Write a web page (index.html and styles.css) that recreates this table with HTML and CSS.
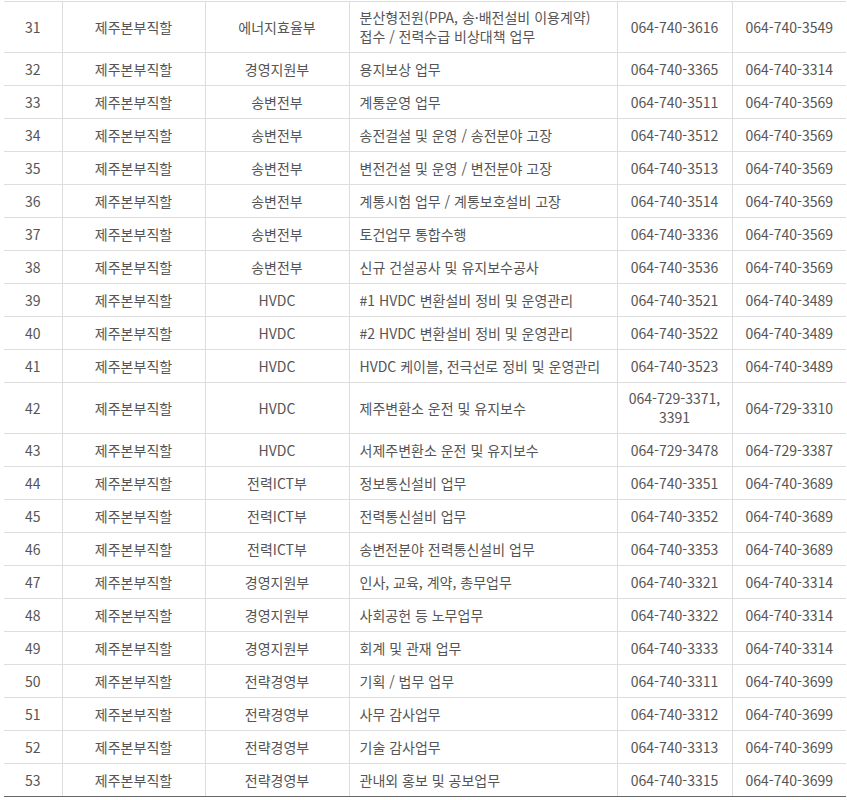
FILE: index.html
```html
<!DOCTYPE html>
<html lang="ko">
<head>
<meta charset="utf-8">
<link rel="stylesheet" href="styles.css">
</head>
<body>
<div class="wrap">
<table class="staff">
<colgroup>
<col class="c-no"><col class="c-org"><col class="c-dept"><col class="c-task"><col class="c-tel"><col class="c-fax">
</colgroup>
<tbody>
<tr class="tall"><td>31</td><td>제주본부직할</td><td>에너지효율부</td><td class="task">분산형전원(PPA, 송·배전설비 이용계약)<br>접수 / 전력수급 비상대책 업무</td><td>064-740-3616</td><td>064-740-3549</td></tr>
<tr><td>32</td><td>제주본부직할</td><td>경영지원부</td><td class="task">용지보상 업무</td><td>064-740-3365</td><td>064-740-3314</td></tr>
<tr><td>33</td><td>제주본부직할</td><td>송변전부</td><td class="task">계통운영 업무</td><td>064-740-3511</td><td>064-740-3569</td></tr>
<tr><td>34</td><td>제주본부직할</td><td>송변전부</td><td class="task">송전걸설 및 운영 / 송전분야 고장</td><td>064-740-3512</td><td>064-740-3569</td></tr>
<tr><td>35</td><td>제주본부직할</td><td>송변전부</td><td class="task">변전건설 및 운영 / 변전분야 고장</td><td>064-740-3513</td><td>064-740-3569</td></tr>
<tr><td>36</td><td>제주본부직할</td><td>송변전부</td><td class="task">계통시험 업무 / 계통보호설비 고장</td><td>064-740-3514</td><td>064-740-3569</td></tr>
<tr><td>37</td><td>제주본부직할</td><td>송변전부</td><td class="task">토건업무 통합수행</td><td>064-740-3336</td><td>064-740-3569</td></tr>
<tr><td>38</td><td>제주본부직할</td><td>송변전부</td><td class="task">신규 건설공사 및 유지보수공사</td><td>064-740-3536</td><td>064-740-3569</td></tr>
<tr><td>39</td><td>제주본부직할</td><td>HVDC</td><td class="task">#1 HVDC 변환설비 정비 및 운영관리</td><td>064-740-3521</td><td>064-740-3489</td></tr>
<tr><td>40</td><td>제주본부직할</td><td>HVDC</td><td class="task">#2 HVDC 변환설비 정비 및 운영관리</td><td>064-740-3522</td><td>064-740-3489</td></tr>
<tr><td>41</td><td>제주본부직할</td><td>HVDC</td><td class="task">HVDC 케이블, 전극선로 정비 및 운영관리</td><td>064-740-3523</td><td>064-740-3489</td></tr>
<tr class="tall"><td>42</td><td>제주본부직할</td><td>HVDC</td><td class="task">제주변환소 운전 및 유지보수</td><td>064-729-3371,<br>3391</td><td>064-729-3310</td></tr>
<tr><td>43</td><td>제주본부직할</td><td>HVDC</td><td class="task">서제주변환소 운전 및 유지보수</td><td>064-729-3478</td><td>064-729-3387</td></tr>
<tr><td>44</td><td>제주본부직할</td><td>전력ICT부</td><td class="task">정보통신설비 업무</td><td>064-740-3351</td><td>064-740-3689</td></tr>
<tr><td>45</td><td>제주본부직할</td><td>전력ICT부</td><td class="task">전력통신설비 업무</td><td>064-740-3352</td><td>064-740-3689</td></tr>
<tr><td>46</td><td>제주본부직할</td><td>전력ICT부</td><td class="task">송변전분야 전력통신설비 업무</td><td>064-740-3353</td><td>064-740-3689</td></tr>
<tr><td>47</td><td>제주본부직할</td><td>경영지원부</td><td class="task">인사, 교육, 계약, 총무업무</td><td>064-740-3321</td><td>064-740-3314</td></tr>
<tr><td>48</td><td>제주본부직할</td><td>경영지원부</td><td class="task">사회공헌 등 노무업무</td><td>064-740-3322</td><td>064-740-3314</td></tr>
<tr><td>49</td><td>제주본부직할</td><td>경영지원부</td><td class="task">회계 및 관재 업무</td><td>064-740-3333</td><td>064-740-3314</td></tr>
<tr><td>50</td><td>제주본부직할</td><td>전략경영부</td><td class="task">기획 / 법무 업무</td><td>064-740-3311</td><td>064-740-3699</td></tr>
<tr><td>51</td><td>제주본부직할</td><td>전략경영부</td><td class="task">사무 감사업무</td><td>064-740-3312</td><td>064-740-3699</td></tr>
<tr><td>52</td><td>제주본부직할</td><td>전략경영부</td><td class="task">기술 감사업무</td><td>064-740-3313</td><td>064-740-3699</td></tr>
<tr><td>53</td><td>제주본부직할</td><td>전략경영부</td><td class="task">관내외 홍보 및 공보업무</td><td>064-740-3315</td><td>064-740-3699</td></tr>
</tbody>
</table>
</div>
</body>
</html>
```
FILE: styles.css
```css
html, body {
  margin: 0;
  padding: 0;
  background: #fff;
}
.wrap {
  padding: 1px 0 0 4px;
  overflow: hidden;
}
.staff {
  width: 842px;
  border-collapse: collapse;
  table-layout: fixed;
  font-family: "Noto Sans CJK KR", "Noto Sans", sans-serif;
  font-size: 14px;
  line-height: 18px;
  color: #555;
  border-top: 1px solid #ddd;
  border-bottom: 1px solid #666;
}
.c-no { width: 58px; }
.c-org { width: 143px; }
.c-dept { width: 144px; }
.c-task { width: 268px; }
.c-tel { width: 115px; }
.c-fax { width: 114px; }
.staff td {
  border: 1px solid #ddd;
  border-top: 0;
  padding: 7px 4px;
  text-align: center;
  vertical-align: middle;
}
.staff tr.tall td {
  padding-top: 6px;
  padding-bottom: 6px;
  line-height: 19px;
}
.staff tr:last-child td {
  border-bottom: 1px solid #666;
}
.staff td:first-child { border-left: 0; }
.staff td:last-child { border-right: 0; }
.staff td.task {
  text-align: left;
  padding-left: 10px;
}
```
